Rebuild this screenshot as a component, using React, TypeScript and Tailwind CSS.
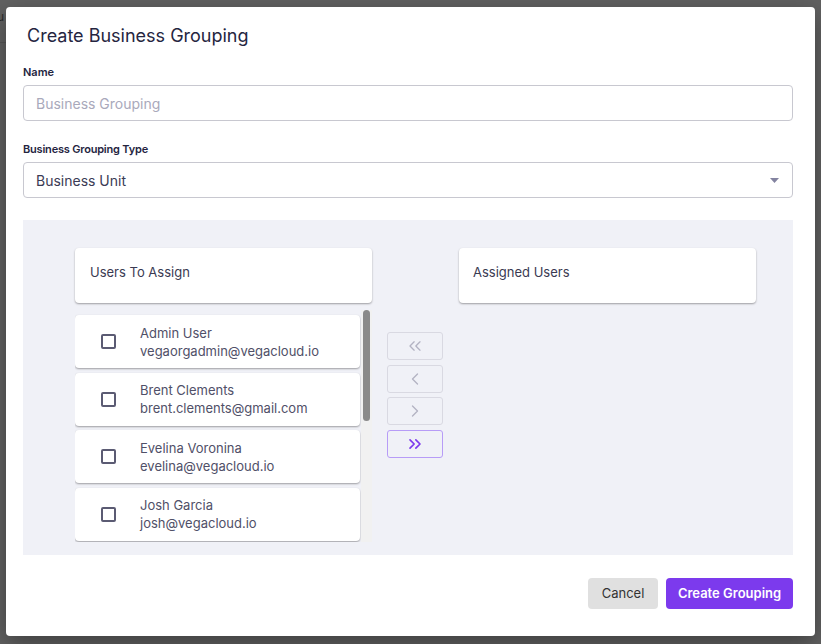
import { ChevronLeft, ChevronRight, ChevronsLeft, ChevronsRight } from "lucide-react";

const users = [
  { name: "Admin User", email: "vegaorgadmin@vegacloud.io" },
  { name: "Brent Clements", email: "brent.clements@gmail.com" },
  { name: "Evelina Voronina", email: "evelina@vegacloud.io" },
  { name: "Josh Garcia", email: "josh@vegacloud.io" },
];

function MoveButton({ active, children }: { active?: boolean; children: React.ReactNode }) {
  return (
    <button
      className={`flex h-[28px] w-[56px] items-center justify-center rounded-[3px] border ${
        active ? "border-[#b79cf7] text-[#7c3aed]" : "border-[#d9d9e2] text-[#b3b3c3]"
      }`}
    >
      {children}
    </button>
  );
}

export default function App() {
  return (
    <div
      className="relative h-[644px] w-[821px] overflow-hidden bg-[#616161] pl-[6px] pt-[7px]"
      style={{ fontFamily: "Inter, 'Noto Sans', sans-serif" }}
    >
      <span className="absolute left-[-3px] top-[8px] text-[12px] text-[#2a2a2a]">u</span>
      <div className="absolute left-0 top-[42px] h-px w-[6px] bg-[#555]" />

      <div className="relative flex h-[629px] w-[809px] flex-col rounded-[4px] bg-white pl-[17px] pr-[22px] pt-[17px] shadow-[0_8px_24px_rgba(0,0,0,0.35)]">
        <h1 className="h-[24px] pl-[4px] text-[18px] leading-[24px] text-[#25253f]">Create Business Grouping</h1>

        <label className="mt-[17px] h-[14px] text-[11px] font-semibold leading-[14px] text-[#25253f]">Name</label>
        <div className="mt-[6px] flex h-[36px] items-center rounded-[4px] border border-[#c8c8d0] px-[12px] text-[14px] text-[#a9a9bb]">
          Business Grouping
        </div>

        <label className="mt-[21px] h-[14px] text-[11px] font-semibold leading-[14px] tracking-[-0.2px] text-[#25253f]">
          Business Grouping Type
        </label>
        <div className="mt-[6px] flex h-[36px] items-center justify-between rounded-[4px] border border-[#c8c8d0] pl-[12px] pr-[13px] text-[14px] text-[#3b3b55]">
          <span>Business Unit</span>
          <svg width="9" height="5" viewBox="0 0 9 5">
            <path d="M0 0h9L4.5 5z" fill="#8383a0" />
          </svg>
        </div>

        <div className="mt-[22px] flex h-[335px] bg-[#f0f1f7] pl-[52px] pt-[28px]">
          <div className="flex w-[297px] flex-col">
            <div className="h-[55px] rounded-[4px] bg-white pl-[15px] pt-[14px] text-[13px] leading-[20px] text-[#3a3a52] shadow-[0_1px_2px_rgba(0,0,0,0.35)]">
              Users To Assign
            </div>
            <div className="mt-[7px] flex h-[232px] overflow-hidden">
              <div className="flex w-[285px] flex-col gap-[4.5px] pt-[5px]">
                {users.map((u) => (
                  <div
                    key={u.email}
                    className="flex h-[53px] shrink-0 items-center rounded-[4px] bg-white shadow-[0_1px_2px_rgba(0,0,0,0.35)]"
                  >
                    <div className="ml-[26px] h-[15px] w-[15px] rounded-[2px] border-2 border-[#5b5b73]" />
                    <div className="ml-[24px] text-[13px] leading-[18px] text-[#505068]">
                      <div>{u.name}</div>
                      <div>{u.email}</div>
                    </div>
                  </div>
                ))}
              </div>
              <div className="ml-[1px] w-[11px] bg-[#f1f1f1] pl-[2px]">
                <div className="h-[111px] w-[7px] rounded-full bg-[#8a8a8a]" />
              </div>
            </div>
          </div>

          <div className="ml-[15px] mt-[84px] flex flex-col gap-[4.5px]">
            <MoveButton>
              <ChevronsLeft size={20} strokeWidth={1.6} />
            </MoveButton>
            <MoveButton>
              <ChevronLeft size={20} strokeWidth={1.6} />
            </MoveButton>
            <MoveButton>
              <ChevronRight size={20} strokeWidth={1.6} />
            </MoveButton>
            <MoveButton active>
              <ChevronsRight size={20} strokeWidth={2} />
            </MoveButton>
          </div>

          <div className="ml-[16px] w-[297px]">
            <div className="h-[55px] rounded-[4px] bg-white pl-[14px] pt-[14px] text-[13px] leading-[20px] text-[#3a3a52] shadow-[0_1px_2px_rgba(0,0,0,0.35)]">
              Assigned Users
            </div>
          </div>
        </div>

        <div className="mt-[23px] flex justify-end gap-[8px]">
          <button className="h-[31px] w-[70px] rounded-[4px] bg-[#e0e0e0] text-[13px] text-[#333]">Cancel</button>
          <button className="h-[31px] w-[127px] rounded-[4px] bg-[#7c3aed] text-[13px] font-semibold text-white">
            Create Grouping
          </button>
        </div>
      </div>
    </div>
  );
}
